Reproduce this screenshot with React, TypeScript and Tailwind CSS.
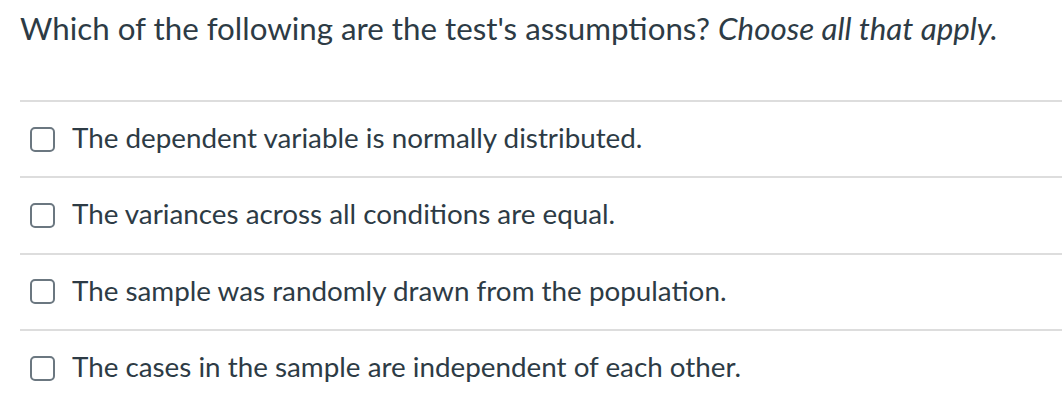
import React from "react";

const options = [
  "The dependent variable is normally distributed.",
  "The variances across all conditions are equal.",
  "The sample was randomly drawn from the population.",
  "The cases in the sample are independent of each other.",
];

export default function App() {
  return (
    <div className="w-[1062px] h-[406px] bg-white text-[#2d3b45] overflow-hidden" style={{ fontFamily: "Lato, 'Open Sans', sans-serif" }}>
      <div className="pl-[20px] pt-[8px] h-[100px]">
        <p className="text-[31.3px] leading-[40px]">
          Which of the following are the test's assumptions? <em>Choose all that apply.</em>
        </p>
      </div>
      <div className="ml-[20px]">
        {options.map((o) => (
          <div key={o} className="border-t-2 border-[#dddddd] h-[76.3px] flex items-center pl-[10px]">
            <span className="w-[25px] h-[25px] border-2 border-[#6b7780] rounded-[5px] shrink-0" />
            <span className="ml-[17px] text-[27.8px] leading-[32px] -mt-[2px]">{o}</span>
          </div>
        ))}
      </div>
    </div>
  );
}
